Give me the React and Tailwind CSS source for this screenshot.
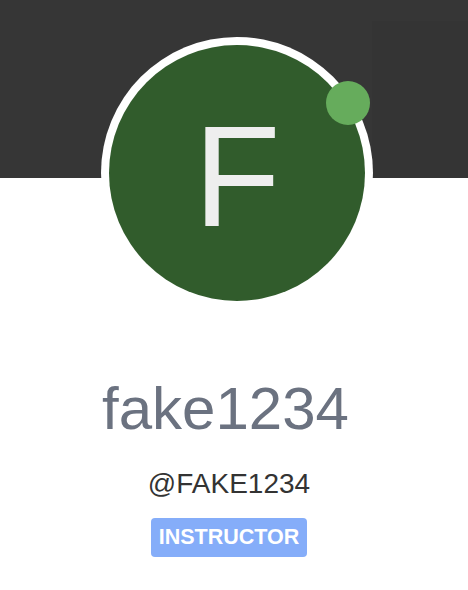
export default function App() {
  return (
    <div className="w-[468px] min-h-[590px] bg-white font-['Liberation_Sans',Arial,sans-serif]">
      {/* cover */}
      <div className="relative h-[178px] bg-[#363636]">
        <div className="absolute right-0 top-[21px] h-[157px] w-[96px] bg-[#343434]" />
      </div>

      {/* avatar */}
      <div className="relative z-10 -mt-[141px] flex pl-[101px]">
        <div className="relative h-[272px] w-[272px] rounded-full bg-white p-[8px]">
          <div className="flex h-full w-full items-center justify-center rounded-full bg-[#315c2c]">
            <span className="mt-[8px] text-[142px] leading-none text-[#eeeeee]">F</span>
          </div>
          <span className="absolute left-[225px] top-[44px] h-[44px] w-[44px] rounded-full bg-[#66ac5c]" />
        </div>
      </div>

      {/* info */}
      <div className="flex flex-col items-center pr-[10px]">
        <h1 className="mt-[70px] pr-[7px] text-[60px] leading-none text-[#6b7280]">fake1234</h1>
        <p className="mt-[31px] text-[28px] leading-none text-[#333333]">@FAKE1234</p>
        <span className="mt-[20px] flex h-[39px] items-center rounded-[4px] bg-[#85adf9] px-[8px] text-[21.5px] font-bold leading-none text-white">
          INSTRUCTOR
        </span>
      </div>
    </div>
  );
}
